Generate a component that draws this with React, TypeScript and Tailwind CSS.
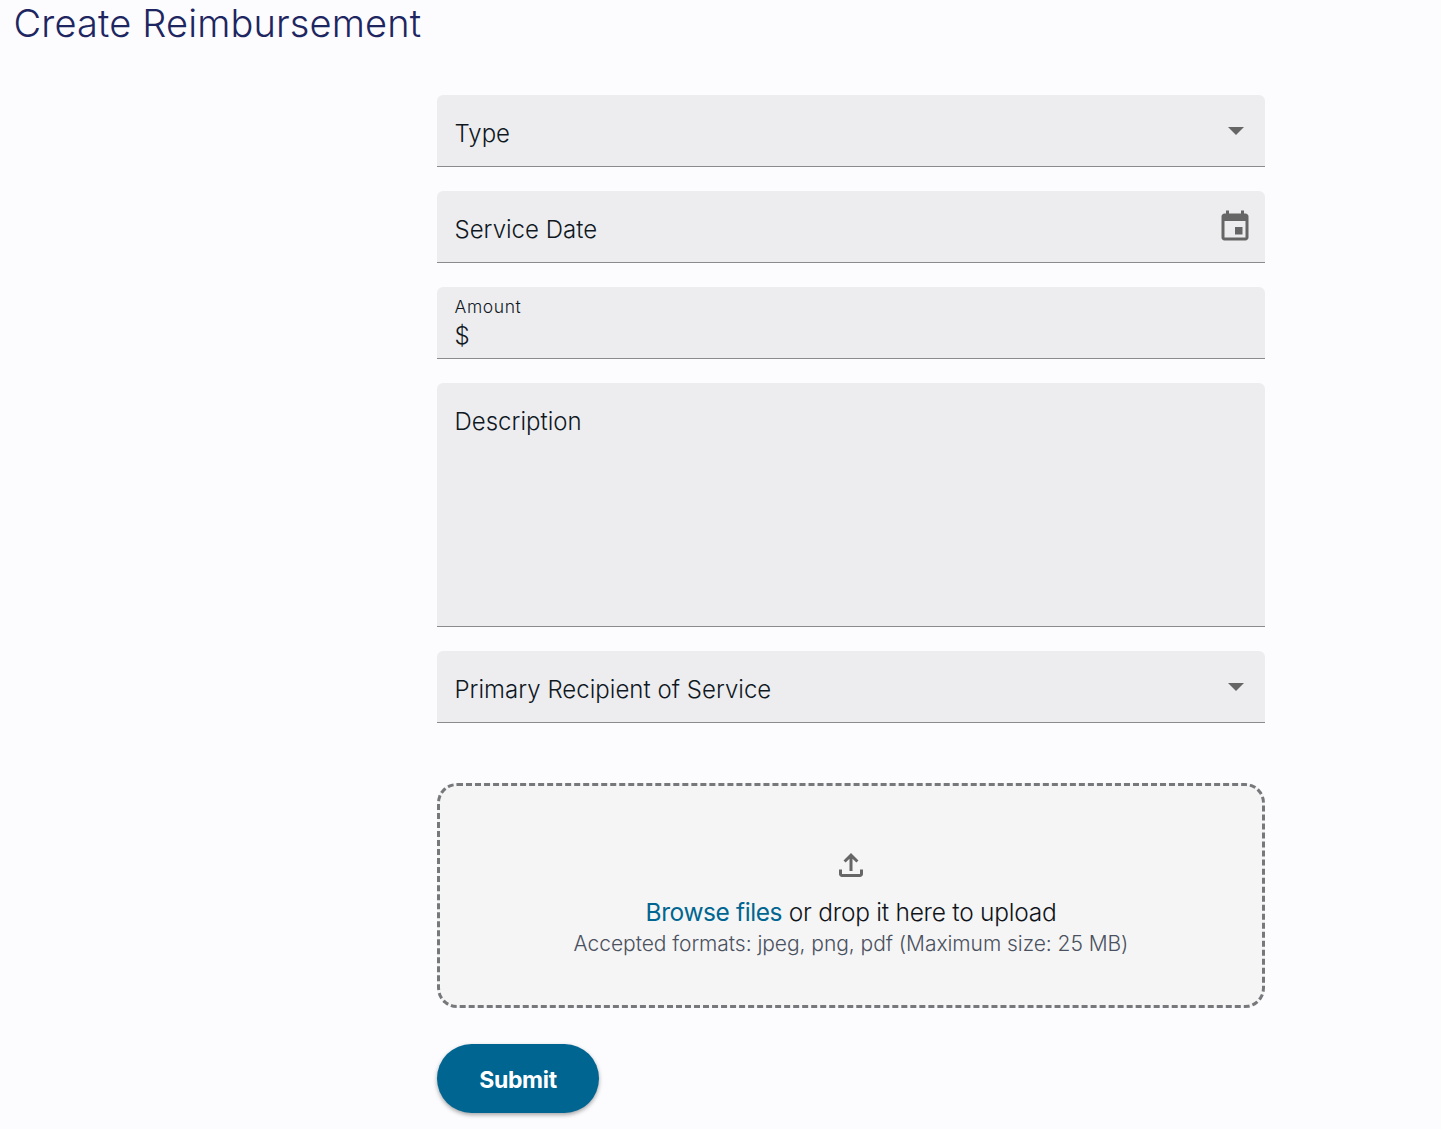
import { ReactNode } from 'react';

const font = "font-['Inter','Noto_Sans',sans-serif]";

function Field({ label, icon, className }: { label: string; icon?: ReactNode; className?: string }) {
  return (
    <div className={`flex justify-between rounded-t-md bg-[#ededef] border-b border-[#8b8b8d] pl-[17.5px] ${className ?? 'h-[72px]'}`}>
      <span className="mt-[24px] text-[24px] font-[350] leading-[30px] tracking-[0.02px] text-[#10181f]">{label}</span>
      {icon}
    </div>
  );
}

function Caret() {
  return (
    <svg viewBox="0 0 24 24" className="mt-[24px] mr-[17px] h-6 w-6" fill="#666666">
      <path d="M4 8h16l-8 8z" />
    </svg>
  );
}

function CalendarIcon() {
  return (
    <svg viewBox="0 0 24 24" className="mt-[18px] mr-[12px] h-9 w-9" fill="#666666">
      <path d="M17 12h-5v5h5v-5zM16 1v2H8V1H6v2H5c-1.11 0-1.99.9-1.99 2L3 19c0 1.1.89 2 2 2h14c1.1 0 2-.9 2-2V5c0-1.1-.9-2-2-2h-1V1h-2zm3 18H5V8h14v11z" />
    </svg>
  );
}

export default function App() {
  return (
    <div className={`min-h-[1129px] bg-[#fcfcff] ${font}`}>
      <h1 className="pl-[13.5px] text-[38px] font-[350] leading-[46px] tracking-[0.15px] text-[#1e2661]">Create Reimbursement</h1>

      <div className="ml-[437px] mt-[49px] flex w-[828px] flex-col">
        <div className="flex flex-col gap-6">
          <Field label="Type" icon={<Caret />} />
          <Field label="Service Date" icon={<CalendarIcon />} />

          <div className="h-[72px] rounded-t-md bg-[#ededef] border-b border-[#8b8b8d] pl-[17.5px] pt-[9px] text-[#10181f]">
            <div className="text-[17.5px] font-[350] leading-[21px] tracking-[0.6px]">Amount</div>
            <div className="mt-[4px] text-[24px] font-[350] leading-[30px]">$</div>
          </div>

          <Field label="Description" className="h-[244px]" />
          <Field label="Primary Recipient of Service" icon={<Caret />} />
        </div>

        <div className="mt-[60px] flex h-[225px] flex-col items-center rounded-[20px] border-[3px] border-dashed border-[#77787c] bg-[#f5f5f5] pt-[61px]">
          <svg viewBox="0 0 24 24" className="h-9 w-9" fill="#666666">
            <path d="M18 15v3H6v-3H4v3c0 1.1.9 2 2 2h12c1.1 0 2-.9 2-2v-3h-2zM7 9l1.41 1.41L11 7.83V16h2V7.83l2.59 2.58L17 9l-5-5-5 5z" />
          </svg>
          <p className="mt-[13px] text-[24.5px] font-[350] leading-[32px] tracking-[-0.25px] text-[#10141a]">
            <span className="text-[#006591] font-normal tracking-[-0.4px]">Browse files</span> or drop it here to upload
          </p>
          <p className="mt-[2px] text-[21px] font-[350] leading-[28px] tracking-[-0.05px] text-[#4a5160]">
            Accepted formats: jpeg, png, pdf (Maximum size: 25 MB)
          </p>
        </div>

        <button className="mt-[36px] h-[69px] w-[162px] rounded-full bg-[#006591] pt-[4px] text-[23px] font-bold tracking-[-0.3px] text-white shadow-[0_2px_4px_rgba(0,0,0,0.35)]">
          Submit
        </button>
      </div>
    </div>
  );
}
